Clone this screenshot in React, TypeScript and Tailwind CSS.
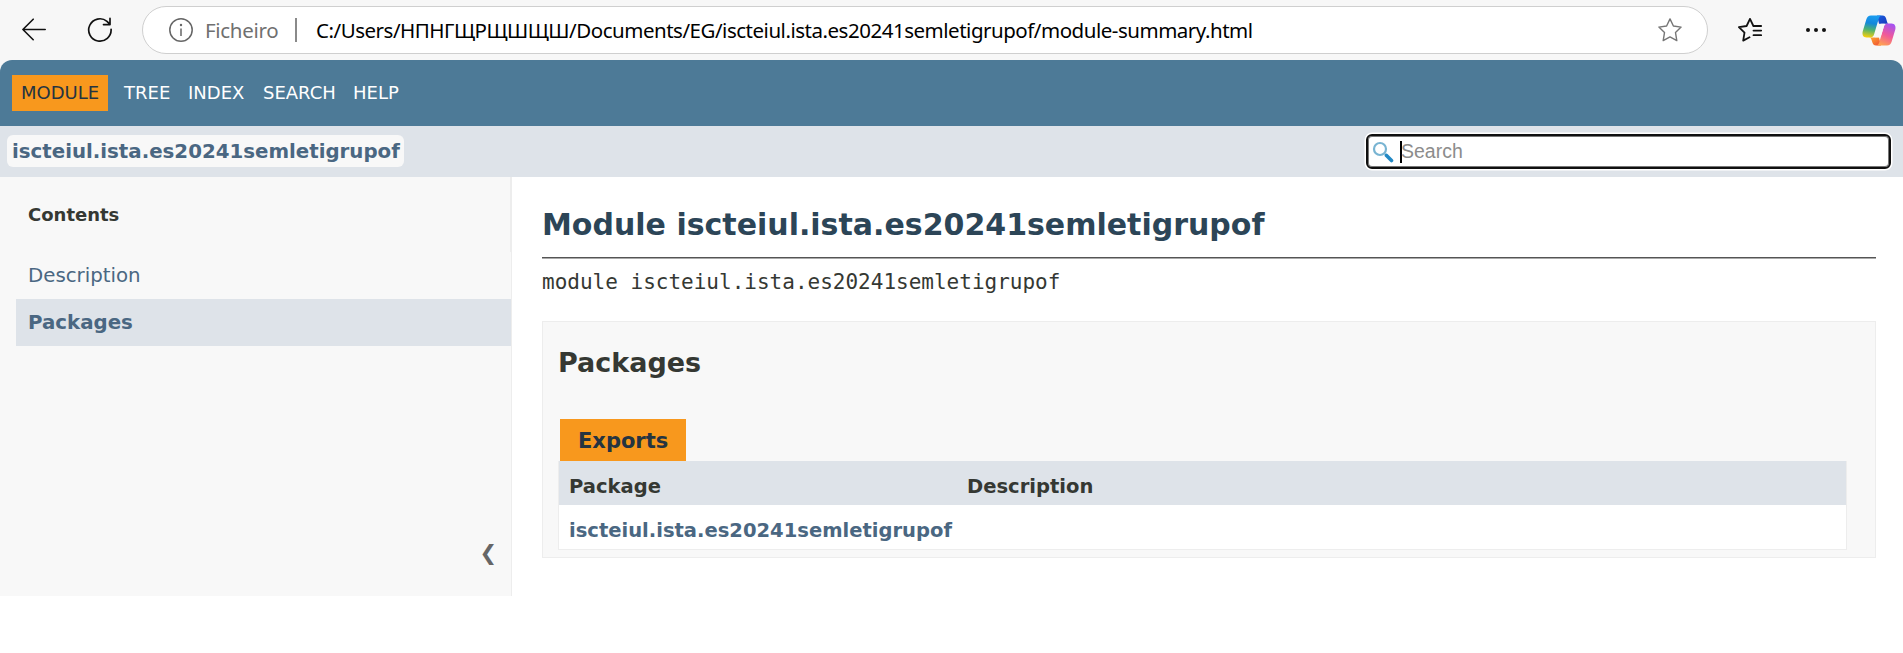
import React from "react";

const MODULE = "iscteiul.ista.es20241semletigrupof";

const star = "M12 0.9 L15.4 8 L23.1 9.1 L17.5 14.6 L18.8 22.6 L12 18.9 L5.2 22.6 L6.5 14.6 L0.9 9.1 L8.6 8 Z";

function BackIcon() {
  return (
    <svg width="24" height="24" viewBox="0 0 24 24" fill="none" stroke="#111" strokeWidth="1.6" strokeLinecap="round" strokeLinejoin="round">
      <path d="M23.2 11.500H.9M11.2 1.200 .9 11.500l10.3 10.2" />
    </svg>
  );
}

function ReloadIcon() {
  return (
    <svg width="26" height="26" viewBox="0 0 26 26" fill="none" stroke="#111" strokeWidth="1.7" strokeLinecap="round" strokeLinejoin="round">
      <path d="M24.1 12.3A11.2 11.2 0 1 1 20 4.3L23 7.3M23 1.4V7.6H16.5" />
    </svg>
  );
}

function InfoIcon() {
  return (
    <svg width="24" height="24" viewBox="0 0 24 24" fill="none" stroke="#666" strokeWidth="1.5">
      <circle cx="12" cy="12" r="11.2" />
      <path d="M12 10.5v7.5" />
      <circle cx="12" cy="7" r="1.2" fill="#666" stroke="none" />
    </svg>
  );
}

function CopilotIcon() {
  return (
    <svg width="34" height="31" viewBox="0 0 34 31">
      <defs>
        <linearGradient id="cpA" x1="0.5" y1="0" x2="0.35" y2="1">
          <stop offset="0" stopColor="#1b9df0" />
          <stop offset="0.35" stopColor="#1488dc" />
          <stop offset="0.65" stopColor="#4fb36f" />
          <stop offset="1" stopColor="#f6cf0c" />
        </linearGradient>
        <linearGradient id="cpB" x1="0.7" y1="0" x2="0.3" y2="1">
          <stop offset="0" stopColor="#a653f0" />
          <stop offset="0.5" stopColor="#f0589a" />
          <stop offset="1" stopColor="#ffa350" />
        </linearGradient>
        <linearGradient id="cpC" x1="0" y1="0" x2="1" y2="1">
          <stop offset="0" stopColor="#1a5fe0" />
          <stop offset="1" stopColor="#1736b8" />
        </linearGradient>
        <linearGradient id="cpD" x1="0" y1="0" x2="1" y2="1">
          <stop offset="0" stopColor="#ffab2e" />
          <stop offset="1" stopColor="#ee4a35" />
        </linearGradient>
      </defs>
      <path d="M15 .5h5.500c2 0 3 1 3.600 3l1 3.500c.4 1.300 1 1.800 2.400 1.800H17z" fill="url(#cpC)" />
      <path d="M19 30.500h-5c-2 0-3-1-3.600-3l-1-3c-.4-1.300-1-2-2.400-2h10z" fill="url(#cpD)" />
      <path d="M25 30.500H14c2 0 2.700-1.500 3.200-3l4.600-15.500c.6-2 1.700-3.500 4-3.500h3.700c3.500 0 4.500 3 3.800 6l-3.600 12c-.8 2.500-2.200 4-4.700 4z" fill="url(#cpB)" />
      <path d="M9 .5h11c-2 0-2.700 1.500-3.200 3l-4.600 15.500c-.6 2-1.700 3.500-4 3.500H4.500C1 22.500 0 19.500.7 16.500L4.300 4.500C5.100 2 6.500.5 9 .5z" fill="url(#cpA)" />
      <path d="M16.200 11.500c.5-1.700 1.700-2.700 3.300-2.700h3.200l-3.200 10.400c-.6 2-1.700 3.100-3.500 3.100h-3.200z" fill="#f7f7f7" />
    </svg>
  );
}

function AddressBar() {
  return (
    <header className="flex h-[60px] items-start bg-[#f7f7f7] font-['Noto_Sans',sans-serif] text-[20.5px]">
      <div className="flex h-[60px] w-[142px] shrink-0 items-center pl-[22px]">
        <BackIcon />
        <div className="ml-[41px]"><ReloadIcon /></div>
      </div>
      <div className="mt-[6px] flex h-[48px] w-[1566px] shrink-0 items-center rounded-full border-[1.5px] border-[#cfcfcf] bg-white pl-[26px] pr-[25px]">
        <InfoIcon />
        <span className="ml-[12px] w-[74px] whitespace-nowrap tracking-[-0.3px] text-[#707070]">Ficheiro</span>
        <span className="ml-[16px] h-[24px] w-[2px] bg-[#8a8a8a]" />
        <span className="ml-[19px] whitespace-nowrap tracking-[-0.48px] text-black">
          C:/Users/НПНГЩРЩШЩШ/Documents/EG/{MODULE}/module-summary.html
        </span>
        <svg className="ml-auto" width="24" height="24" viewBox="0 0 24 24" fill="none" stroke="#767676" strokeWidth="1.4" strokeLinejoin="round">
          <path d={star} />
        </svg>
      </div>
      <div className="flex h-[60px] flex-1 items-center pl-[30px]">
        <svg width="24" height="24" viewBox="0 0 24 24" fill="none" stroke="#111" strokeWidth="1.8" strokeLinecap="round" strokeLinejoin="round">
          <path d="M23.200 8H15.400L12 .9 8.600 8 .9 9.100l5.600 5.500-1.300 8 6.300-3.300M15.500 12.600h7.700M15.500 17.200h7.700" />
        </svg>
        <svg className="ml-[44px]" width="20" height="4" viewBox="0 0 20 4" fill="#111">
          <circle cx="2" cy="2" r="2" />
          <circle cx="10" cy="2" r="2" />
          <circle cx="18" cy="2" r="2" />
        </svg>
        <div className="ml-[36px] shrink-0"><CopilotIcon /></div>
      </div>
    </header>
  );
}

function TopNav() {
  return (
    <div className="bg-[#f7f7f7]">
      <nav className="flex h-[66px] items-center rounded-t-[12px] bg-[#4d7a97] pl-[12px] text-[18px] leading-[36px] text-white">
        <span className="mr-[16px] h-[36px] w-[96px] bg-[#f8981d] pl-[9px] text-[#253441]">MODULE</span>
        <span className="w-[64px]">TREE</span>
        <span className="w-[75px]">INDEX</span>
        <span className="w-[90px]">SEARCH</span>
        <span>HELP</span>
      </nav>
    </div>
  );
}

function SubNav() {
  return (
    <div className="flex h-[51px] items-start justify-between bg-[#dee3e9] pl-[7px] pr-[12px]">
      <div className="mt-[9px] h-[32px] w-[397px] whitespace-nowrap rounded-[6px] bg-[#f8f8f8] pl-[5px] text-[19.8px] font-bold leading-[34px] text-[#4a6782]">
        {MODULE}
      </div>
      <div className="mt-[8px] flex h-[35px] w-[525px] items-center rounded-[6px] border-[2.500px] border-[#101010] bg-white pl-[4px] shadow-[0_0_0_1.5px_#fff,inset_0_0_0_1px_#767676]">
        <svg width="22" height="22" viewBox="0 0 22 22" fill="none">
          <circle cx="8" cy="8" r="6" stroke="#78b4d2" strokeWidth="2.2" />
          <path d="m12.800 13 1.700 1.500" stroke="#78b4d2" strokeWidth="2" />
          <path d="m14.500 14.500 5 5" stroke="#2389c5" strokeWidth="3.600" strokeLinecap="round" />
        </svg>
        <span className="ml-[6px] h-[22px] w-[2px] bg-black" />
        <span className="-ml-px font-['Liberation_Sans',sans-serif] text-[19.5px] text-[#8c8c8c]">Search</span>
      </div>
    </div>
  );
}

function Sidebar() {
  return (
    <aside className="flex h-[419px] w-[512px] shrink-0 flex-col border-r border-[#ededed] bg-[#f8f8f8]">
      <div className="h-[75px] border-r border-[#ededed] pl-[28px] pt-[22px] text-[18px] font-bold leading-[32px]">Contents</div>
      <div className="ml-[16px] h-[47px] pl-[12px] text-[19.8px] leading-[48px] text-[#4a6782]">Description</div>
      <div className="ml-[16px] h-[47px] bg-[#dee3e9] pl-[12px] text-[19.8px] font-bold leading-[48px] text-[#4a6782]">Packages</div>
      <div className="mt-auto flex h-[63px] justify-end pr-[14px] text-[21px] leading-[40px] text-[#666]">❮</div>
    </aside>
  );
}

function Content() {
  return (
    <main className="flex-1 pl-[30px] pr-[27px]">
      <h1 className="h-[80px] whitespace-nowrap pt-[30px] text-[30px] font-bold leading-[36px] text-[#2c4557]">Module {MODULE}</h1>
      <div className="h-[2px] border-t border-[#555] bg-[#aaa]" />
      <div className="h-[62px] pt-[8px] font-['DejaVu_Sans_Mono',monospace] text-[21px] leading-[30px]">module {MODULE}</div>
      <section className="h-[237px] border border-[#ededed] bg-[#f8f8f8] pl-[15px] pr-[28px]">
        <h2 className="h-[97px] pt-[24px] text-[27px] font-bold leading-[34px]">Packages</h2>
        <div className="ml-[2px] h-[42px] w-[126px] bg-[#f8981d] pl-[18px] text-[21px] font-bold leading-[45px] text-[#253441]">Exports</div>
        <div className="h-[89px] border border-t-0 border-[#ededed] bg-white text-[19.55px] font-bold">
          <div className="flex h-[44px] bg-[#dee3e9] leading-[51px]">
            <span className="w-[398px] pl-[10px]">Package</span>
            <span className="pl-[10px]">Description</span>
          </div>
          <div className="h-[44px] whitespace-nowrap pl-[10px] leading-[51px] text-[#4a6782]">{MODULE}</div>
        </div>
      </section>
    </main>
  );
}

export default function App() {
  return (
    <div className="h-[653px] w-[1903px] overflow-hidden bg-white font-['DejaVu_Sans',sans-serif] text-[#353833]">
      <AddressBar />
      <TopNav />
      <SubNav />
      <div className="flex">
        <Sidebar />
        <Content />
      </div>
    </div>
  );
}
